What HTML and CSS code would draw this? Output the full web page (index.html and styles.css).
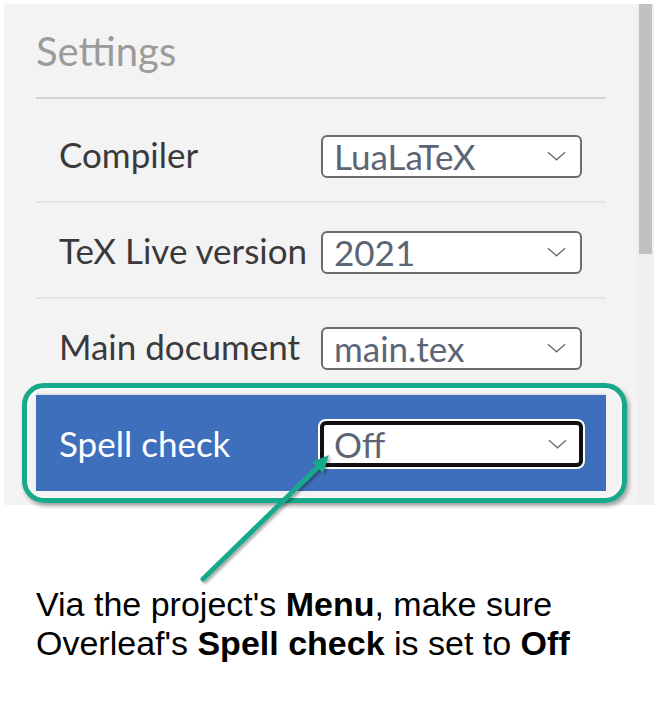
FILE: index.html
```html
<!DOCTYPE html>
<html lang="en">
<head>
<meta charset="utf-8">
<title>Settings - Spell check</title>
<link rel="stylesheet" href="styles.css">
</head>
<body>
<div class="page">
  <div class="panel">
    <div class="content">
      <h1 class="title">Settings</h1>
      <div class="list">
        <div class="row">
          <span class="label">Compiler</span>
          <div class="select"><span class="value">LuaLaTeX</span><svg class="chev" viewBox="0 0 20 10"><path d="M1 1 L10 9 L19 1"/></svg></div>
        </div>
        <div class="row">
          <span class="label">TeX Live version</span>
          <div class="select"><span class="value">2021</span><svg class="chev" viewBox="0 0 20 10"><path d="M1 1 L10 9 L19 1"/></svg></div>
        </div>
        <div class="row">
          <span class="label">Main document</span>
          <div class="select"><span class="value">main.tex</span><svg class="chev" viewBox="0 0 20 10"><path d="M1 1 L10 9 L19 1"/></svg></div>
        </div>
        <div class="row row-active">
          <span class="label">Spell check</span>
          <div class="select select-focus"><span class="value">Off</span><svg class="chev" viewBox="0 0 20 10"><path d="M1 1 L10 9 L19 1"/></svg></div>
        </div>
      </div>
    </div>
    <div class="scrollbar"><div class="thumb"></div></div>
  </div>
  <div class="highlight"></div>
  <svg class="arrow" width="654" height="722" viewBox="0 0 654 722">
    <defs>
      <filter id="sh" x="-20%" y="-20%" width="140%" height="140%">
        <feDropShadow dx="2" dy="2" stdDeviation="1.5" flood-color="#000" flood-opacity="0.35"/>
      </filter>
    </defs>
    <g filter="url(#sh)">
      <line x1="203" y1="579" x2="318" y2="467" stroke="#17a98b" stroke-width="5" stroke-linecap="round"/>
      <polygon points="329,455 312,462 323,473" fill="#17a98b"/>
    </g>
  </svg>
  <p class="caption">Via the project's <b>Menu</b>, make sure<br>Overleaf's <b>Spell check</b> is set to <b>Off</b></p>
</div>
</body>
</html>
```
FILE: styles.css
```css
html, body {
  margin: 0;
  padding: 0;
  background: #ffffff;
}
.page {
  position: relative;
  width: 654px;
  height: 722px;
  overflow: hidden;
  padding: 4px 0 0 4px;
  box-sizing: border-box;
}
.panel {
  display: flex;
  height: 501px;
  background: #f3f3f3;
}
.content {
  flex: 1;
  padding: 0 31px 0 32px;
}
.title {
  margin: 0;
  height: 93px;
  box-sizing: content-box;
  border-bottom: 2px solid #d2d2d2;
  font-family: Lato, "Noto Sans", sans-serif;
  font-weight: 400;
  font-size: 40px;
  line-height: 1;
  color: #9b9b9b;
  display: flex;
  align-items: center;
}
.list {
  padding-top: 8px;
}
.row {
  height: 94px;
  border-bottom: 2px solid #e4e4e4;
  display: flex;
  align-items: center;
  padding-left: 23px;
  box-sizing: content-box;
}
.row-active {
  background: #3e6fbc;
  border-bottom: none;
  height: 96px;
}
.label {
  width: 262px;
  font-family: Lato, "Noto Sans", sans-serif;
  font-size: 35px;
  color: #3a3a3c;
}
.row-active .label {
  color: #ffffff;
}
.select {
  width: 261px;
  height: 43px;
  box-sizing: border-box;
  border: 2px solid #6b6b6b;
  border-radius: 6px;
  background: #ffffff;
  display: flex;
  align-items: center;
  justify-content: space-between;
  padding: 0 14px 0 11px;
  margin-top: 4px;
}
.select-focus {
  width: 263px;
  height: 46px;
  margin-left: -1px;
  border: 4px solid #111111;
  box-shadow: 0 0 0 2px #ffffff;
  padding-left: 10px;
  padding-right: 12px;
  margin-top: 2px;
}
.value {
  font-family: Lato, "Noto Sans", sans-serif;
  font-size: 35px;
  line-height: 1;
  color: #5b6576;
}
.chev {
  width: 19px;
  height: 10px;
  fill: none;
  stroke: #6b6b6b;
  stroke-width: 1.4;
}
.scrollbar {
  width: 17px;
  background: #efefef;
}
.thumb {
  margin-left: 2px;
  width: 13px;
  height: 250px;
  background: #c1c1c1;
}
.highlight {
  position: absolute;
  left: 22px;
  top: 383px;
  width: 605px;
  height: 120px;
  box-sizing: border-box;
  border: 5px solid #17a98b;
  border-radius: 22px;
  box-shadow: 2px 3px 4px rgba(0, 0, 0, 0.35), inset 0 0 0 2px rgba(255,255,255,0.5);
}
.arrow {
  position: absolute;
  left: 0;
  top: 0;
}
.caption {
  margin: 0;
  padding: 80px 0 0 32px;
  font-family: "Liberation Sans", Arial, sans-serif;
  font-size: 34px;
  line-height: 39px;
  color: #000000;
}
.caption b {
  font-weight: 700;
}
```
